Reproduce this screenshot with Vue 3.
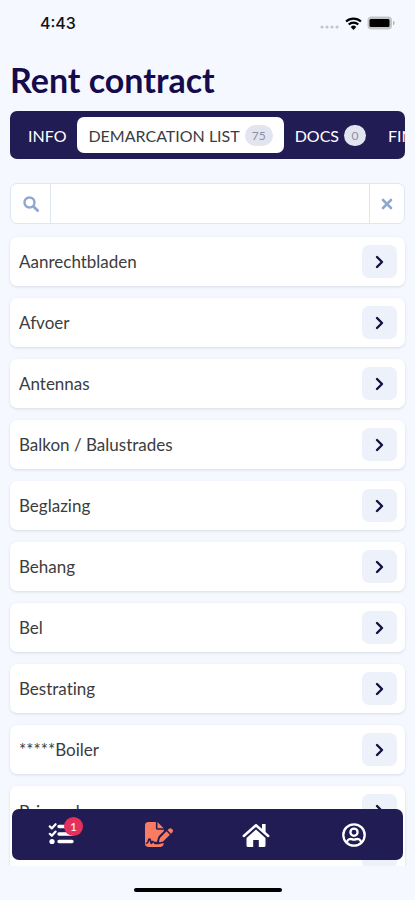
<script setup>
import { ref } from 'vue'

const tabs = [
  { id: 'info', label: 'INFO' },
  { id: 'demarcation', label: 'DEMARCATION LIST', count: 75 },
  { id: 'docs', label: 'DOCS', count: 0 },
  { id: 'financial', label: 'FINANCIAL' },
]
const activeTab = ref('demarcation')
const query = ref('')
const items = [
  'Aanrechtbladen',
  'Afvoer',
  'Antennas',
  'Balkon / Balustrades',
  'Beglazing',
  'Behang',
  'Bel',
  'Bestrating',
  '*****Boiler',
]
</script>

<template>
  <div class="screen">
    <header class="status">
      <span class="time">4:43</span>
      <div class="indicators">
        <svg class="dots" viewBox="0 0 20 4" aria-hidden="true">
          <circle cx="2" cy="2" r="1.6" /><circle cx="7" cy="2" r="1.6" />
          <circle cx="12" cy="2" r="1.6" /><circle cx="17" cy="2" r="1.6" />
        </svg>
        <svg class="wifi" viewBox="0 0 16 12" aria-hidden="true">
          <path d="M1 4.2a10.2 10.2 0 0 1 14 0M3.5 6.9a6.6 6.6 0 0 1 9 0" fill="none" stroke="#000" stroke-width="2" />
          <path d="M8 12 5.4 9.2a3.8 3.8 0 0 1 5.2 0z" />
        </svg>
        <svg class="battery" viewBox="0 0 28 14" aria-hidden="true">
          <rect x="0.5" y="0.5" width="24.5" height="13" rx="4" fill="#c3c6c9" />
          <rect x="2.5" y="3" width="20" height="8" rx="1.5" fill="#000" />
          <path d="M26 4.7c2.2.8 2.2 3.8 0 4.6z" fill="#b2b5b8" />
        </svg>
      </div>
    </header>

    <main class="content">
      <h1>Rent contract</h1>

      <nav class="tabs" aria-label="Contract sections">
        <button
          v-for="tab in tabs"
          :key="tab.id"
          type="button"
          class="tab"
          :class="{ active: tab.id === activeTab }"
          @click="activeTab = tab.id"
        >
          {{ tab.label }}
          <span v-if="tab.count !== undefined" class="count">{{ tab.count }}</span>
        </button>
      </nav>

      <form class="search" @submit.prevent>
        <label for="search-field" class="addon" aria-label="Search">
          <svg viewBox="0 0 16 16" aria-hidden="true">
            <circle cx="6.5" cy="6.5" r="5" fill="none" stroke="currentColor" stroke-width="2.4" />
            <path d="m10.4 10.4 4.2 4.2" stroke="currentColor" stroke-width="2.8" stroke-linecap="round" />
          </svg>
        </label>
        <input id="search-field" v-model="query" type="text" />
        <button type="button" class="addon clear" aria-label="Clear search" @click="query = ''">
          <svg viewBox="0 0 16 16" aria-hidden="true">
            <path d="m4 4 8 8M12 4l-8 8" stroke="currentColor" stroke-width="2.6" stroke-linecap="round" />
          </svg>
        </button>
      </form>

      <ul class="list">
        <li v-for="item in items" :key="item" class="card">
          <span>{{ item }}</span>
          <button type="button" class="open" :aria-label="'Open ' + item">
            <svg viewBox="0 0 16 16" aria-hidden="true"><path d="m5 3 5 5-5 5" /></svg>
          </button>
        </li>
        <li class="card tall">
          <span>Brievenbus</span>
          <button type="button" class="open" aria-label="Open Brievenbus">
            <svg viewBox="0 0 16 16" aria-hidden="true"><path d="m5 3 5 5-5 5" /></svg>
          </button>
        </li>
      </ul>
    </main>

    <footer class="dock">
      <nav class="bar" aria-label="Main">
        <a href="#tasks" aria-label="Tasks">
          <svg class="tasks" viewBox="0 0 26 24" aria-hidden="true">
            <path d="m1.8 3.4 2 2 3.8-4.2M1.8 10.8l2 2 3.8-4.2" fill="none" stroke="#fff" stroke-width="2.2" stroke-linecap="round" stroke-linejoin="round" />
            <circle cx="4" cy="18.5" r="2.6" />
            <path d="M11 3.5h13M11 11h13M11 18.5h13" stroke="#fff" stroke-width="3.4" stroke-linecap="round" />
          </svg>
          <span class="badge">1</span>
        </a>
        <a href="#contract" aria-label="Contract">
          <svg class="contract" viewBox="0 0 576 512" aria-hidden="true">
            <path d="M64 0C29 0 0 29 0 64v384c0 35 29 64 64 64h256c35 0 64-29 64-64v-19c-8 4-16 7-25 9l-59 15c-4 1-8 1-12 1h-83c-9 0-17-5-22-14l-8-16c-1-3-4-4-7-4s-6 1-7 4l-8 16c-4 9-14 15-24 14s-18-7-21-17l-20-66-11 38c-7 24-30 41-55 41h-6V422h6c11 0 21-7 24-18l15-49c4-14 17-23 31-23s27 9 31 23l12 39c16-14 45-10 57 10h58c-1-6-1-12 1-18l15-59c4-17 12-32 25-45l99-99v-23H256c-18 0-32-14-32-32V0zm192 0v128h128zm294 139c-16-16-41-16-57 0l-29 29 71 71 30-29c15-16 15-41 0-57zM312 321c-4 4-7 9-8 15l-15 60c-1 5 0 11 4 15s10 6 15 4l60-15c6-1 11-4 15-8l130-130-71-71z" />
          </svg>
        </a>
        <a href="#home" aria-label="Home">
          <svg class="home" viewBox="0 0 28 24" aria-hidden="true">
            <path d="M1.8 13 14 2.2 26.2 13" fill="none" stroke="#fff" stroke-width="2.5" stroke-linecap="round" stroke-linejoin="round" />
            <path d="M20 1h3.6v9L20 6.8zM14 6.6l9.5 8.3V22.5q0 1.5-1.5 1.5h-5.2v-7h-5.6v7H6q-1.5 0-1.5-1.5v-7.6z" />
          </svg>
        </a>
        <a href="#profile" aria-label="Profile">
          <svg class="profile" viewBox="0 0 24 24" aria-hidden="true">
            <g fill="none" stroke="#fff" stroke-width="2.3">
              <circle cx="12" cy="12" r="10.7" />
              <circle cx="12" cy="9.2" r="3.6" />
              <path d="M4.8 19.4c1-3.4 3.4-3.7 4.8-3.2 1.6.6 3.2.6 4.8 0 1.4-.5 3.8-.2 4.8 3.2" />
            </g>
          </svg>
        </a>
      </nav>
      <div class="home-indicator"></div>
    </footer>
  </div>
</template>

<style>
body {
  background: #f5f9ff;
}
</style>

<style scoped>
.screen {
  display: flex;
  flex-direction: column;
  height: 100vh;
  overflow: hidden;
  background: #f5f9ff;
  color: #3c3c40;
  font-family: Lato, sans-serif;
  font-size: 17px;
  font-variant-ligatures: none;
}
button,
input {
  margin: 0;
  border: 0;
  padding: 0;
  background: none;
  color: inherit;
  font: inherit;
}
svg {
  display: block;
}
.status {
  display: flex;
  flex: none;
  align-items: center;
  justify-content: space-between;
  height: 46px;
  padding: 0 20px 0 40px;
}
.time {
  color: #111;
  font: 500 16px/20px Inter, sans-serif;
}
.indicators {
  display: flex;
  align-items: center;
  gap: 5px;
}
.dots {
  width: 20px;
  height: 4px;
  margin-top: 8px;
  fill: #c2c6cc;
}
.wifi {
  width: 17px;
  height: 13px;
}
.battery {
  width: 28px;
  height: 14px;
}
.content {
  display: flex;
  flex: 1;
  flex-direction: column;
  min-height: 0;
  padding: 0 10px;
}
h1 {
  margin: 14px 0 11px;
  color: #150b4d;
  font-size: 34px;
  font-weight: 700;
  line-height: 40px;
}
.tabs {
  display: flex;
  flex: none;
  align-items: stretch;
  height: 48px;
  box-sizing: border-box;
  padding: 6px 7px;
  overflow: hidden;
  border-radius: 7px;
  background: #211c53;
}
.tab {
  display: flex;
  flex: none;
  align-items: center;
  gap: 5px;
  padding: 0 11px;
  border-radius: 7px;
  color: #fff;
  font-size: 16px;
  white-space: nowrap;
}
.tab.active {
  background: #fff;
  color: #3c3c40;
}
.count {
  min-width: 22px;
  box-sizing: border-box;
  padding: 0 7px;
  border-radius: 11px;
  background: #e2e5ef;
  color: #8b90a0;
  font-size: 12px;
  line-height: 21px;
  text-align: center;
}
.search {
  display: flex;
  flex: none;
  height: 41px;
  box-sizing: border-box;
  margin: 24px 0 0;
  border: 1px solid #dfe6f0;
  border-radius: 7px;
  background: #fff;
}
.addon {
  display: flex;
  flex: none;
  align-items: center;
  justify-content: center;
  width: 39px;
  border-right: 1px solid #dfe6f0;
  color: #8fa8d0;
}
.addon svg {
  width: 16px;
  height: 16px;
}
.clear {
  width: 35px;
  border-right: 0;
  border-left: 1px solid #dfe6f0;
}
.search input {
  flex: 1;
  min-width: 0;
  padding: 0 10px;
}
.list {
  display: flex;
  flex: 1;
  flex-direction: column;
  gap: 12px;
  min-height: 0;
  margin: 0 -10px;
  padding: 13px 10px 0;
  overflow: hidden;
  list-style: none;
}
.card {
  display: flex;
  flex: none;
  align-items: center;
  justify-content: space-between;
  min-height: 49px;
  box-sizing: border-box;
  padding: 8px 8px 8px 9px;
  border-radius: 7px;
  background: #fff;
  box-shadow: 0 1px 3px #d6dbe3;
}
.open {
  display: flex;
  align-items: center;
  justify-content: center;
  width: 35px;
  height: 33px;
  border-radius: 7px;
  background: #edf1fa;
}
.open svg {
  width: 16px;
  height: 16px;
  fill: none;
  stroke: #150f42;
  stroke-width: 2.4;
  stroke-linecap: round;
  stroke-linejoin: round;
}
.tall {
  align-items: stretch;
  min-height: 90px;
}
.tall span {
  padding-top: 7px;
}
.tall .open {
  height: auto;
  align-items: flex-start;
  padding-top: 9px;
}
.dock {
  position: relative;
  flex: none;
  height: 34px;
}
.bar {
  position: absolute;
  right: 12px;
  bottom: 40px;
  left: 12px;
  display: grid;
  grid-template-columns: repeat(4, 1fr);
  align-items: center;
  height: 51px;
  border-radius: 7px;
  background: #211c53;
}
.bar a {
  position: relative;
  display: flex;
  justify-content: center;
}
.bar svg {
  height: 24px;
  fill: #fff;
}
.tasks {
  width: 26px;
}
.bar .contract {
  width: 28px;
  height: 25px;
  fill: #fb7b62;
}
.home {
  width: 28px;
}
.profile {
  width: 24px;
}
.badge {
  position: absolute;
  top: -6px;
  left: 50%;
  width: 19px;
  margin-left: 3px;
  border-radius: 10px;
  background: #e5305b;
  color: #fff;
  font-size: 12px;
  line-height: 19px;
  text-align: center;
}
.home-indicator {
  width: 148px;
  height: 4px;
  margin: 22px auto 0;
  border-radius: 2px;
  background: #000;
}
</style>
